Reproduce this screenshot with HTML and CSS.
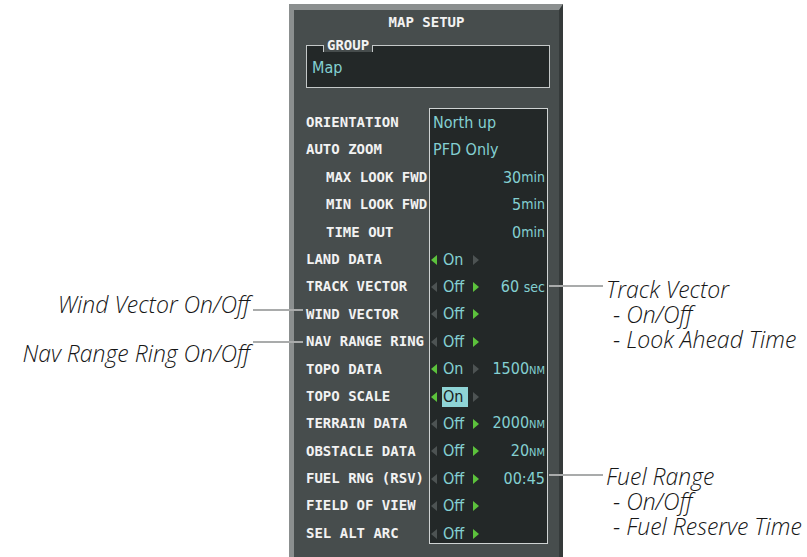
FILE: index.html
```html
<!DOCTYPE html>
<html>
<head>
    <title>Map Setup</title>
    <meta name="viewport" content="width=device-width, initial-scale=1.0">
    <link rel="stylesheet" href="styles.css">
</head>
<body>
    <div class="figure">
        <div class="panel">
            <div class="panel-title">MAP SETUP</div>

            <div class="group">
                <span class="group-label">GROUP</span>
                <div class="group-value">Map</div>
            </div>

            <div class="settings">
                <div class="labels">
                    <div class="row">ORIENTATION</div>
                    <div class="row">AUTO ZOOM</div>
                    <div class="row sub">MAX LOOK FWD</div>
                    <div class="row sub">MIN LOOK FWD</div>
                    <div class="row sub">TIME OUT</div>
                    <div class="row">LAND DATA</div>
                    <div class="row">TRACK VECTOR</div>
                    <div class="row">WIND VECTOR</div>
                    <div class="row">NAV RANGE RING</div>
                    <div class="row">TOPO DATA</div>
                    <div class="row">TOPO SCALE</div>
                    <div class="row">TERRAIN DATA</div>
                    <div class="row">OBSTACLE DATA</div>
                    <div class="row">FUEL RNG (RSV)</div>
                    <div class="row">FIELD OF VIEW</div>
                    <div class="row">SEL ALT ARC</div>
                </div>

                <div class="values">
                    <div class="row text">North up</div>
                    <div class="row text">PFD Only</div>
                    <div class="row num">30<small>min</small></div>
                    <div class="row num">5<small>min</small></div>
                    <div class="row num">0<small>min</small></div>
                    <div class="row">
                        <span class="toggle"><i class="arr-l lit"></i><span class="state">On</span><i class="arr-r"></i></span>
                    </div>
                    <div class="row">
                        <span class="toggle"><i class="arr-l"></i><span class="state">Off</span><i class="arr-r lit"></i></span>
                        <span class="extra">60 <small>sec</small></span>
                    </div>
                    <div class="row">
                        <span class="toggle"><i class="arr-l"></i><span class="state">Off</span><i class="arr-r lit"></i></span>
                    </div>
                    <div class="row">
                        <span class="toggle"><i class="arr-l"></i><span class="state">Off</span><i class="arr-r lit"></i></span>
                    </div>
                    <div class="row">
                        <span class="toggle"><i class="arr-l lit"></i><span class="state">On</span><i class="arr-r"></i></span>
                        <span class="extra">1500<span class="unit">NM</span></span>
                    </div>
                    <div class="row">
                        <span class="toggle"><i class="arr-l lit"></i><span class="state selected">On</span><i class="arr-r"></i></span>
                    </div>
                    <div class="row">
                        <span class="toggle"><i class="arr-l"></i><span class="state">Off</span><i class="arr-r lit"></i></span>
                        <span class="extra">2000<span class="unit">NM</span></span>
                    </div>
                    <div class="row">
                        <span class="toggle"><i class="arr-l"></i><span class="state">Off</span><i class="arr-r lit"></i></span>
                        <span class="extra">20<span class="unit">NM</span></span>
                    </div>
                    <div class="row">
                        <span class="toggle"><i class="arr-l"></i><span class="state">Off</span><i class="arr-r lit"></i></span>
                        <span class="extra">00:45</span>
                    </div>
                    <div class="row">
                        <span class="toggle"><i class="arr-l"></i><span class="state">Off</span><i class="arr-r lit"></i></span>
                    </div>
                    <div class="row">
                        <span class="toggle"><i class="arr-l"></i><span class="state">Off</span><i class="arr-r lit"></i></span>
                    </div>
                </div>
            </div>
        </div>

        <!-- callouts -->
        <div class="leader wind"></div>
        <div class="leader nav"></div>
        <div class="leader track"></div>
        <div class="leader fuel"></div>

        <div class="note note-left wind">Wind Vector On/Off</div>
        <div class="note note-left nav">Nav Range Ring On/Off</div>

        <div class="note note-right track">
            <div>Track Vector</div>
            <div class="sub">- On/Off</div>
            <div class="sub">- Look Ahead Time</div>
        </div>
        <div class="note note-right fuel">
            <div>Fuel Range</div>
            <div class="sub">- On/Off</div>
            <div class="sub">- Fuel Reserve Time</div>
        </div>
    </div>
</body>
</html>
```

FILE: styles.css
```css
body { margin: 0; background: #fff; }

.figure { position: relative; width: 807px; height: 557px; overflow: hidden; padding-top: 4px; box-sizing: border-box; }

/* panel */
.panel { margin-left: 289px; width: 274px; height: 553px; box-sizing: border-box; border-style: solid; border-width: 6px 4px 0 5px; border-color: #8b8f8f #353a3a transparent #8b8f8f; background: #474d4d; font-family: "DejaVu Sans Mono", monospace; font-size: 14px; font-weight: bold; color: #f2f2f2; }
.panel-title { height: 25px; line-height: 25px; text-align: center; }

.group { position: relative; height: 43px; box-sizing: border-box; margin: 10px 9px 0 12px; padding: 12px 5px 0; border: 1px solid #c4c8c8; background: #232828; }
.group-label { position: absolute; left: 16px; top: -8px; height: 14px; line-height: 14px; padding: 0 4px; background: #474d4d; }
.group-label::after { content: ""; position: absolute; left: 0; right: 0; top: 7px; bottom: 0; border-left: 1px solid #c4c8c8; border-right: 1px solid #c4c8c8; }
.group-value { line-height: 20px; font-family: "DejaVu Sans Condensed", sans-serif; font-size: 16px; font-weight: normal; color: #84d0d2; }

/* settings list */
.settings { display: flex; margin-top: 20px; }
.labels { width: 135px; padding: 1px 0 0 12px; box-sizing: border-box; }
.labels .sub { padding-left: 20px; }
.row { height: 27.4px; line-height: 27.4px; white-space: nowrap; }

.values { width: 119px; height: 436px; box-sizing: border-box; border: 1px solid #cfd3d3; background: #232828; font-family: "DejaVu Sans Condensed", sans-serif; font-size: 16px; font-weight: normal; color: #84d0d2; }
.values .row { display: flex; align-items: center; justify-content: space-between; padding: 0 2px 0 1px; }
.values .text { padding-left: 3px; }
.values .num { justify-content: flex-end; }
.values small { font-size: 14px; }
.values .unit { font-size: 11px; }

.toggle { display: flex; align-items: center; }
.state { width: 26px; height: 20px; line-height: 20px; margin-left: 5px; padding-left: 1px; box-sizing: border-box; }
.state.selected { background: #8fd4d6; color: #1b2020; }
.arr-l { width: 0; height: 0; border-top: 5px solid transparent; border-bottom: 5px solid transparent; border-right: 6px solid #4d5353; }
.arr-r { width: 0; height: 0; margin-left: 5px; border-top: 5px solid transparent; border-bottom: 5px solid transparent; border-left: 6px solid #4d5353; }
.arr-l.lit { border-right-color: #5cc23c; }
.arr-r.lit { border-left-color: #5cc23c; }

/* callouts */
.leader { position: absolute; height: 2px; background: #a9abab; }
.leader.wind { left: 253px; top: 309px; width: 50px; }
.leader.nav { left: 253px; top: 341px; width: 50px; }
.leader.track { left: 549px; top: 285px; width: 54px; }
.leader.fuel { left: 549px; top: 474px; width: 54px; }

.note { position: absolute; font-family: "Open Sans", sans-serif; font-style: italic; font-weight: 300; font-size: 23px; color: #161616; white-space: nowrap; }
.note-left { right: 557px; line-height: 27px; }
.note-left.wind { top: 291px; }
.note-left.nav { top: 340px; }
.note-right { left: 606px; line-height: 25px; }
.note-right .sub { padding-left: 7px; }
.note-right.track { top: 277px; }
.note-right.fuel { top: 464px; }
```
